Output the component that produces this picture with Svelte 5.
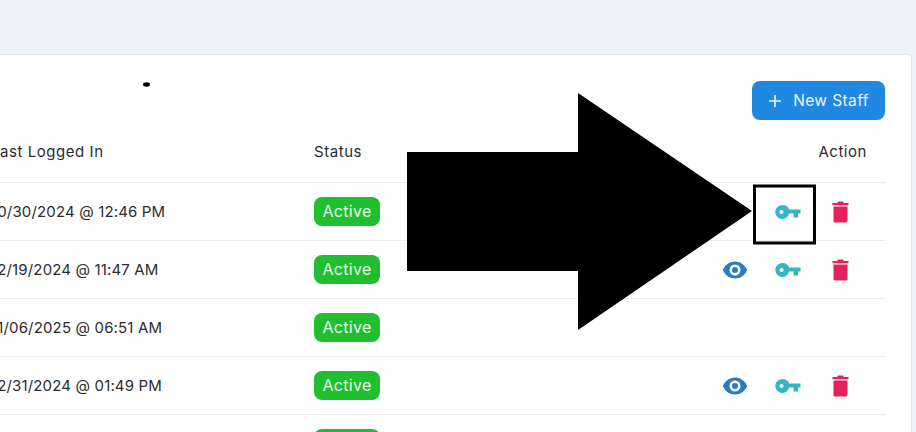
<script>
  const rows = [
    { date: '10/30/2024 @ 12:46 PM', eye: false, key: true, trash: true },
    { date: '12/19/2024 @ 11:47 AM', eye: true, key: true, trash: true },
    { date: '11/06/2025 @ 06:51 AM', eye: false, key: false, trash: false },
    { date: '12/31/2024 @ 01:49 PM', eye: true, key: true, trash: true },
    { date: '', eye: true, key: true, trash: true }
  ];
</script>

<div class="page">
  <section class="card">
    <div class="toolbar">
      <button class="new">
        <svg width="14" height="14" viewBox="0 0 14 14"><path d="M7 1v12M1 7h12" stroke="#e8f4ff" stroke-width="1.7" fill="none"/></svg>
        <span>New Staff</span>
      </button>
    </div>
    <div class="row head">
      <div class="c-date">Last Logged In</div>
      <div class="c-status">Status</div>
      <div class="c-action">Action</div>
    </div>
    {#each rows as r}
      <div class="row">
        <div class="c-date">{r.date}</div>
        <div class="c-status"><span class="badge">Active</span></div>
        <div class="icons">
          <span class="slot">
            {#if r.eye}
              <svg width="26" height="18" viewBox="0 0 26 18"><path fill-rule="evenodd" fill="#2b7cbd" d="M13 .5C7.500.5 3 4 .8 9 3 14 7.500 17.500 13 17.500S23 14 25.200 9C23 4 18.500.5 13 .5ZM13 3.500a5.500 5.500 0 1 1 0 11 5.500 5.500 0 0 1 0-11Z"/><circle cx="13" cy="9" r="3" fill="#2b7cbd"/></svg>
            {/if}
          </span>
          <span class="slot">
            {#if r.key}
              <svg width="26" height="16" viewBox="0 0 26 16"><path fill-rule="evenodd" fill="#35b6c6" d="M7.500 1a7 7 0 0 1 6.600 4.600H25.500V9.500H23V13.500H18.500V9.500H14.100A7 7 0 1 1 7.500 1ZM6.500 6a2 2 0 1 0 0 4 2 2 0 0 0 0-4Z"/></svg>
            {/if}
          </span>
          <span class="slot">
            {#if r.trash}
              <svg width="17" height="22" viewBox="0 0 17 22"><path fill="#e2215f" d="M6 .5h5l.8 1.500h4.700v2.300H.5V2h4.700ZM1.500 5.500h14v14.500a1.500 1.500 0 0 1-1.500 1.500H3A1.500 1.500 0 0 1 1.500 20Z"/></svg>
            {/if}
          </span>
        </div>
      </div>
    {/each}
  </section>

  <svg class="arrow" width="916" height="432" viewBox="0 0 916 432">
    <polygon points="407,152 578,152 578,93 752,211 578,330 578,271 407,271" fill="#000"/>
    <rect x="754.500" y="186" width="60" height="57" fill="none" stroke="#000" stroke-width="3"/>
    <ellipse cx="146.500" cy="84.500" rx="3.500" ry="2.200" fill="#000"/>
  </svg>
</div>

<style>
  :global(body) {
    margin: 0;
    background: #eef3f8;
    overflow: hidden;
  }
  .page {
    position: relative;
    width: 916px;
    height: 432px;
    overflow: hidden;
    padding-top: 54px;
    box-sizing: border-box;
    font-family: Inter, "Noto Sans", sans-serif;
    color: #2c2c30;
  }
  .card {
    margin-left: -9px;
    width: 921px;
    height: 400px;
    box-sizing: border-box;
    background: #fff;
    border-top: 1px solid #e3e8ee;
    border-right: 1px solid #e3e8ee;
    border-radius: 0 4px 0 0;
    padding-right: 25px;
  }
  .toolbar {
    display: flex;
    justify-content: flex-end;
    padding-top: 26px;
    height: 39px;
  }
  .new {
    width: 133px;
    height: 39px;
    margin-right: 1px;
    display: flex;
    align-items: center;
    justify-content: center;
    gap: 11px;
    border: 0;
    border-radius: 8px;
    background: #2088e0;
    color: #e8f4ff;
    font: 400 15.500px Inter, sans-serif;
    letter-spacing: 0.4px;
    padding: 0;
  }
  .row {
    display: grid;
    grid-template-columns: 323px 1fr 178px;
    align-items: center;
    height: 57px;
    border-bottom: 1px solid #e9ecef;
    font-size: 15px;
    letter-spacing: 0.15px;
  }
  .row.head {
    height: 63px;
    box-sizing: border-box;
    letter-spacing: 0.55px;
  }
  .row.head .c-action {
    text-align: right;
    padding-right: 19px;
  }
  .badge {
    display: inline-block;
    width: 66px;
    height: 29px;
    line-height: 29px;
    text-align: center;
    border-radius: 8px;
    background: #1fbf2f;
    color: #e9fbe9;
    font-size: 16px;
    font-weight: 400;
    letter-spacing: 0.3px;
  }
  .c-status { display: flex; align-items: center; }
  .icons {
    display: flex;
  }
  .slot {
    width: 53px;
    display: flex;
    align-items: center;
    justify-content: center;
  }
  .arrow {
    position: absolute;
    inset: 0;
  }
</style>
